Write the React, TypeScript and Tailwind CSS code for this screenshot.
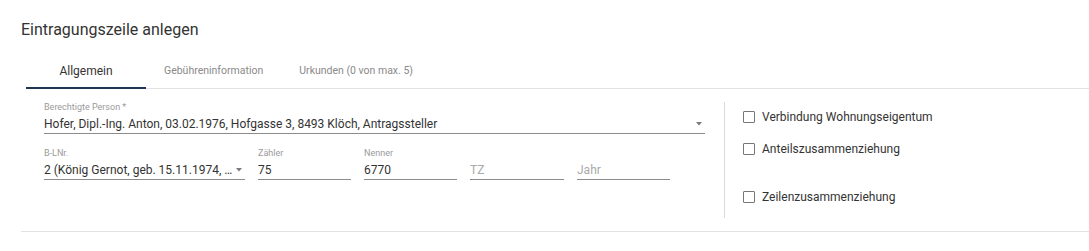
const font = { fontFamily: 'Roboto, "Liberation Sans", sans-serif' };

function Caret() {
  return (
    <svg width="6" height="4" viewBox="0 0 6 4" className="shrink-0">
      <path d="M0 0 L6 0 L3 3.5 Z" fill="#7a7a7a" />
    </svg>
  );
}

interface FieldProps {
  label?: string;
  value?: string;
  placeholder?: string;
  width: string;
  select?: boolean;
}

function Field({ label, value, placeholder, width, select }: FieldProps) {
  return (
    <div className={`${width} flex flex-col`}>
      <div className="h-[10px] text-[9px] leading-[10px] text-[#9a9a9a] whitespace-nowrap">{label ?? ''}</div>
      <div className="mt-[3px] flex items-center h-[19px] pb-[1px] border-b border-[#8c8c8c]">
        <span
          className={`flex-1 min-w-0 text-[12px] leading-[18px] whitespace-nowrap ${
            value ? 'text-[#333]' : 'text-[#aaa]'
          }`}
        >
          {value ?? placeholder}
        </span>
        {select && (
          <span className="pr-[3px] pl-[4px] flex items-center shrink-0">
            <Caret />
          </span>
        )}
      </div>
    </div>
  );
}

function Check({ label }: { label: string }) {
  return (
    <label className="flex items-center gap-[7px] h-[18px]">
      <span className="w-[12px] h-[12px] border border-[#777] rounded-[1px] bg-white" />
      <span className="text-[12px] leading-[18px] text-[#333]">{label}</span>
    </label>
  );
}

const tabs = ['Allgemein', 'Gebühreninformation', 'Urkunden (0 von max. 5)'];

export default function App() {
  return (
    <div className="w-[1089px] h-[251px] bg-white overflow-hidden" style={font}>
      <h2 className="pl-[21px] pt-[20px] text-[16px] leading-[20px] text-[#333] font-normal">
        Eintragungszeile anlegen
      </h2>

      <div className="ml-[26px] mt-[12px] flex border-b border-[#e2e2e2]">
        {tabs.map((t, i) => (
          <div
            key={t}
            className={`min-w-[120px] px-[18px] pt-[11px] pb-[8px] text-center leading-[16px] -mb-px border-b-2 whitespace-nowrap ${
              i === 0 ? 'border-[#1b3553] text-[#333] text-[12px]' : 'border-transparent text-[#8a8a8a] text-[10.5px]'
            }`}
          >
            {t}
          </div>
        ))}
      </div>

      <div className="flex mt-[13px]">
        <div className="pl-[44px] w-[705px] flex flex-col">
          <Field
            label="Berechtigte Person *"
            value="Hofer, Dipl.-Ing. Anton, 03.02.1976, Hofgasse 3, 8493 Klöch, Antragssteller"
            width="w-[661px]"
            select
          />
          <div className="flex gap-[13px] mt-[14px]">
            <Field label="B-LNr." value="2 (König Gernot, geb. 15.11.1974, …" width="w-[201px]" select />
            <Field label="Zähler" value="75" width="w-[93px]" />
            <Field label="Nenner" value="6770" width="w-[93px]" />
            <Field placeholder="TZ" width="w-[94px]" />
            <Field placeholder="Jahr" width="w-[93px]" />
          </div>
        </div>

        <div className="ml-[19px] w-px h-[116px] bg-[#d9d9d9]" />

        <div className="pl-[18px] pt-[6px] flex flex-col">
          <Check label="Verbindung Wohnungseigentum" />
          <div className="mt-[14px]">
            <Check label="Anteilszusammenziehung" />
          </div>
          <div className="mt-[30px]">
            <Check label="Zeilenzusammenziehung" />
          </div>
        </div>
      </div>

      <div className="ml-[21px] mt-[13px] h-px bg-[#e2e2e2]" />
    </div>
  );
}
